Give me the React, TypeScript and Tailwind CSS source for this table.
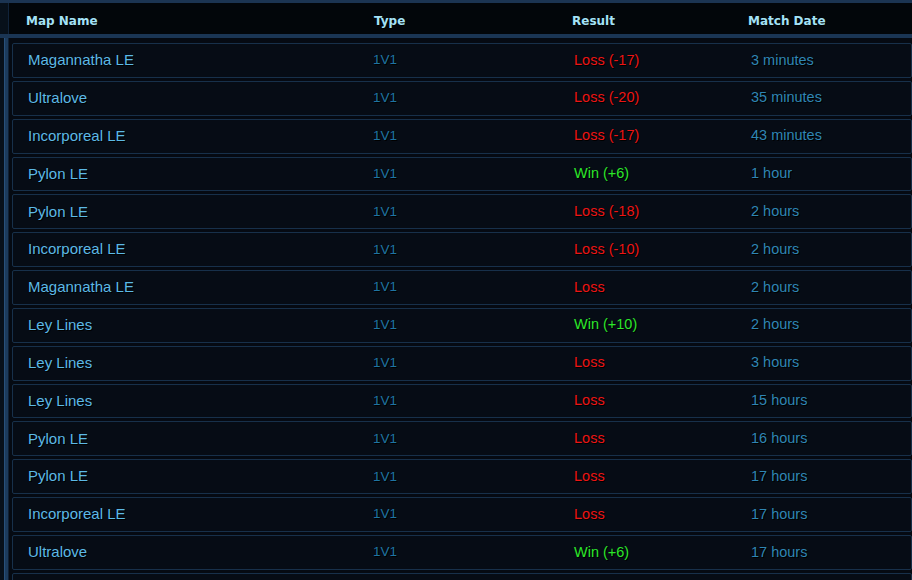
type Match = {
  map: string;
  result: string;
  win: boolean;
  date: string;
};

const matches: Match[] = [
  { map: 'Magannatha LE', result: 'Loss (-17)', win: false, date: '3 minutes' },
  { map: 'Ultralove', result: 'Loss (-20)', win: false, date: '35 minutes' },
  { map: 'Incorporeal LE', result: 'Loss (-17)', win: false, date: '43 minutes' },
  { map: 'Pylon LE', result: 'Win (+6)', win: true, date: '1 hour' },
  { map: 'Pylon LE', result: 'Loss (-18)', win: false, date: '2 hours' },
  { map: 'Incorporeal LE', result: 'Loss (-10)', win: false, date: '2 hours' },
  { map: 'Magannatha LE', result: 'Loss', win: false, date: '2 hours' },
  { map: 'Ley Lines', result: 'Win (+10)', win: true, date: '2 hours' },
  { map: 'Ley Lines', result: 'Loss', win: false, date: '3 hours' },
  { map: 'Ley Lines', result: 'Loss', win: false, date: '15 hours' },
  { map: 'Pylon LE', result: 'Loss', win: false, date: '16 hours' },
  { map: 'Pylon LE', result: 'Loss', win: false, date: '17 hours' },
  { map: 'Incorporeal LE', result: 'Loss', win: false, date: '17 hours' },
  { map: 'Ultralove', result: 'Win (+6)', win: true, date: '17 hours' },
];

const rowBox =
  'flex items-center h-[34.85px] shrink-0 mb-[3px] pl-[15px] border border-[#17304a] rounded-[2px] bg-[#060c15] [text-shadow:1px_1px_0_#000]';

const MatchRow: React.FC<{ m: Match }> = ({ m }) => (
  <div className={rowBox}>
    <div className="w-[345px] text-[15px] text-[#5cb9e6]">{m.map}</div>
    <div className="w-[201px] text-[13.5px] text-[#1f74a2]">1V1</div>
    <div className={`w-[177px] text-[14.5px] ${m.win ? 'text-[#2ce62c]' : 'text-[#ec1515]'}`}>
      {m.result}
    </div>
    <div className="text-[14.5px] text-[#2f86b4]">{m.date}</div>
  </div>
);

export default function App() {
  return (
    <div className="w-[912px] h-[580px] overflow-hidden bg-[#07101a] font-['Liberation_Sans',Arial,sans-serif]">
      <div className="h-[3px] bg-[#1b3452]" />
      <div className="ml-[8px] h-[31px] flex items-center pt-[4px] pl-[17px] bg-[#02060a] border-l border-[#10233a] font-['DejaVu_Sans',sans-serif] font-bold text-[12px] text-[#a4e2f7] [text-shadow:1px_1px_0_#000]">
        <div className="w-[348px]">Map Name</div>
        <div className="w-[198px]">Type</div>
        <div className="w-[176px]">Result</div>
        <div>Match Date</div>
      </div>
      <div className="h-[4px] bg-[#1a3554]" />
      <div className="flex h-full">
        <div className="ml-[4px] w-[4px] bg-[#1c3b5c] border-l border-[#28507a]" />
        <div className="flex-1 flex flex-col pl-[3px] pt-[5px] bg-[#050a12] border-l border-[#0f2034]">
          {matches.map((m, i) => (
            <MatchRow key={i} m={m} />
          ))}
          {/* next row, only its top edge shows */}
          <div className={rowBox} />
        </div>
      </div>
    </div>
  );
}
